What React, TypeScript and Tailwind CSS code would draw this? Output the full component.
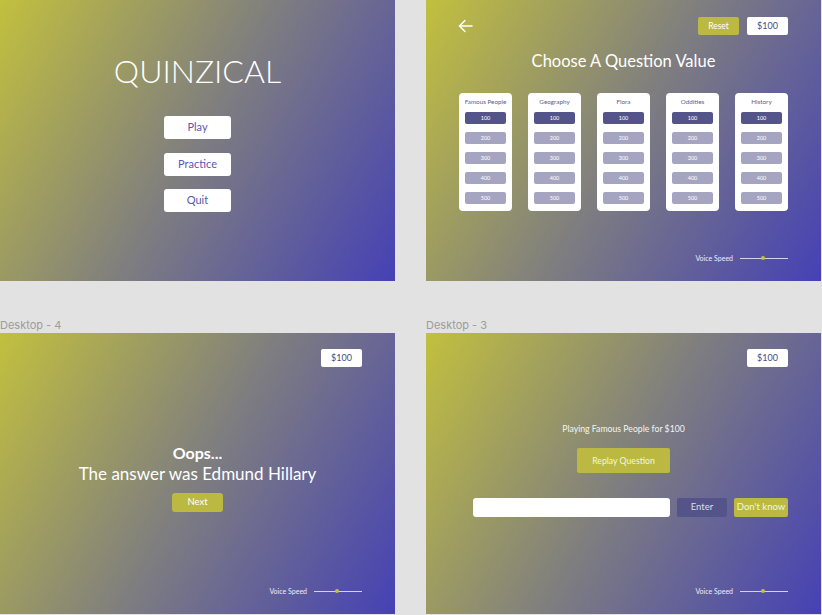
import React from "react";

const panelBg =
  "flex h-[281px] w-[395px] flex-col bg-[linear-gradient(120deg,#c2c03e_0%,#7f7e7f_50%,#4541b5_100%)]";

function VoiceSpeed() {
  return (
    <div className="mt-auto flex items-center justify-end gap-[7px] pr-[33px] pb-[19px]">
      <span className="text-[7px] leading-[8px] text-[#ececf8]">Voice Speed</span>
      <div className="relative h-[8px] w-[48px]">
        <div className="absolute left-0 right-0 top-[3.5px] h-px bg-[#d4d4e4]" />
        <div className="absolute left-[21px] top-[2px] h-[4px] w-[4px] rounded-full bg-[#c4c23c]" />
      </div>
    </div>
  );
}

function Money() {
  return (
    <div className="flex h-[18px] w-[41px] items-center justify-center rounded-[2px] bg-white text-[9px] text-[#4b4a7e]">
      $100
    </div>
  );
}

function MenuButton({ label }: { label: string }) {
  return (
    <div className="flex h-[23px] w-[67px] items-center justify-center rounded-[3px] bg-white text-[11px] text-[#5a57b2]">
      {label}
    </div>
  );
}

function Card({ name }: { name: string }) {
  const values = [100, 200, 300, 400, 500];
  return (
    <div className="flex w-[53px] flex-col items-center rounded-[4px] bg-white px-[6px] pt-[4px] pb-[7px]">
      <div className="h-[10px] whitespace-nowrap text-[6.3px] leading-[10px] text-[#5d5c8c]">{name}</div>
      <div className="mt-[5px] flex w-full flex-col gap-[8px]">
        {values.map((v) => (
          <div
            key={v}
            className={
              v === 100
                ? "h-[12px] rounded-[2px] bg-[#55548a] text-center text-[5.5px] leading-[12px] text-white"
                : "h-[12px] rounded-[2px] bg-[#a6a5c1] text-center text-[5.5px] leading-[12px] text-white"
            }
          >
            {v}
          </div>
        ))}
      </div>
    </div>
  );
}

function Home() {
  return (
    <div className={panelBg + " items-center"}>
      <div className="mt-[54px] text-[32px] font-light leading-[33px] text-white">QUINZICAL</div>
      <div className="mt-[29px] flex flex-col gap-[13.5px]">
        <MenuButton label="Play" />
        <MenuButton label="Practice" />
        <MenuButton label="Quit" />
      </div>
    </div>
  );
}

function Board() {
  return (
    <div className={panelBg}>
      <div className="flex items-center justify-between pt-[17px] pl-[32px] pr-[33px]">
        <svg width="15" height="14" viewBox="0 0 15 14" fill="none" stroke="white" strokeWidth="1.5" strokeLinecap="round" strokeLinejoin="round">
          <path d="M14 7H1.5" />
          <path d="M7 1.5L1.5 7L7 12.5" />
        </svg>
        <div className="flex gap-[8px]">
          <div className="flex h-[18px] w-[41px] items-center justify-center rounded-[2px] bg-[#bbb941] text-[8.5px] text-white">
            Reset
          </div>
          <Money />
        </div>
      </div>
      <div className="mt-[15px] text-center text-[16.5px] leading-[22px] text-white">Choose A Question Value</div>
      <div className="mt-[21px] flex justify-center gap-[16px]">
        <Card name="Famous People" />
        <Card name="Geography" />
        <Card name="Flora" />
        <Card name="Oddities" />
        <Card name="History" />
      </div>
      <VoiceSpeed />
    </div>
  );
}

function Oops() {
  return (
    <div className={panelBg}>
      <div className="flex justify-end pt-[16px] pr-[33px]">
        <Money />
      </div>
      <div className="mt-[75px] text-center text-[16px] font-bold leading-[21px] text-white">Oops...</div>
      <div className="text-center text-[17px] leading-[21px] text-white">The answer was Edmund Hillary</div>
      <div className="mt-[9px] flex justify-center">
        <div className="flex h-[19px] w-[51px] items-center justify-center rounded-[3px] bg-[#bbb941] text-[9.5px] text-white">
          Next
        </div>
      </div>
      <VoiceSpeed />
    </div>
  );
}

function Question() {
  return (
    <div className={panelBg}>
      <div className="flex justify-end pt-[16px] pr-[33px]">
        <Money />
      </div>
      <div className="mt-[56px] text-center text-[8.7px] leading-[12px] text-[#f4f4f0]">Playing Famous People for $100</div>
      <div className="mt-[13px] flex justify-center">
        <div className="flex h-[25px] w-[93px] items-center justify-center rounded-[2px] bg-[#bbb941] text-[8.7px] text-[#f4f4ea]">
          Replay Question
        </div>
      </div>
      <div className="mt-[25px] flex justify-end gap-[7px] pr-[33px]">
        <div className="h-[19px] w-[197px] rounded-[3px] bg-white" />
        <div className="flex h-[19px] w-[50px] items-center justify-center rounded-[2px] bg-[#55548a] text-[9.5px] text-[#dcdcec]">
          Enter
        </div>
        <div className="flex h-[19px] w-[54px] items-center justify-center rounded-[2px] bg-[#bbb941] text-[9.5px] text-[#f4f4e0]">
          Don't know
        </div>
      </div>
      <VoiceSpeed />
    </div>
  );
}

function Label({ text }: { text: string }) {
  return (
    <div className="mt-[36px] h-[16px] font-[family-name:Inter,sans-serif] text-[11px] leading-[16px] text-[#9c9c9c]">
      {text}
    </div>
  );
}

export default function App() {
  return (
    <div className="h-[615px] w-[822px] overflow-hidden bg-[#e2e2e2] font-[family-name:Lato,sans-serif]">
      <div className="grid grid-cols-[395px_395px] gap-x-[31px]">
        <div className="flex flex-col">
          <Home />
          <Label text="Desktop - 4" />
          <Oops />
        </div>
        <div className="flex flex-col">
          <Board />
          <Label text="Desktop - 3" />
          <Question />
        </div>
      </div>
    </div>
  );
}
